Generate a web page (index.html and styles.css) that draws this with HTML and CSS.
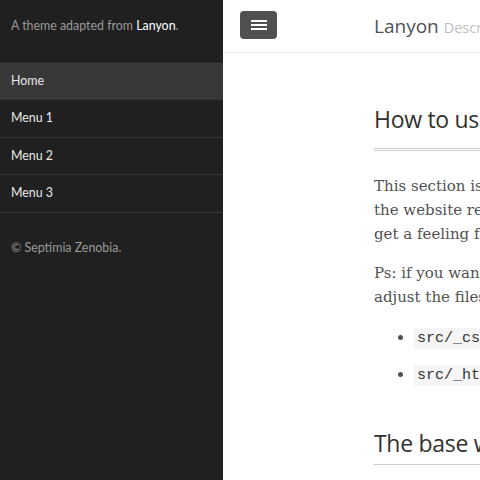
FILE: index.html
```html
<!DOCTYPE html>
<html lang="en">
<head>
<meta charset="utf-8">
<title>Lanyon</title>
<link rel="stylesheet" href="styles.css">
</head>
<body>
<aside class="sidebar">
  <div class="sidebar-about">
    <p>A theme adapted from <a href="#">Lanyon</a>.</p>
  </div>
  <nav class="sidebar-nav">
    <a class="nav-item active" href="#">Home</a>
    <a class="nav-item" href="#">Menu 1</a>
    <a class="nav-item" href="#">Menu 2</a>
    <a class="nav-item" href="#">Menu 3</a>
  </nav>
  <div class="sidebar-footer">
    <p>&copy; Septimia Zenobia.</p>
  </div>
</aside>
<div class="wrap">
  <header class="masthead">
    <button class="toggle" aria-label="Toggle sidebar">
      <svg width="16" height="12" viewBox="0 0 16 12"><rect x="0" y="1" width="16" height="2" fill="#fff"/><rect x="0" y="5" width="16" height="2" fill="#fff"/><rect x="0" y="9" width="16" height="2" fill="#fff"/></svg>
    </button>
    <h3 class="masthead-title"><a href="#">Lanyon</a> <small>Description of the site</small></h3>
  </header>
  <main class="container">
    <h1 class="page-title">How to use this template</h1>
    <p>This section is an introduction that shows<br>the website rendering its markdown, so you<br>get a feeling for the template.</p>
    <p>Ps: if you want to change the look and feel,<br>adjust the files:</p>
    <ul>
      <li><code>src/_css/main.css</code></li>
      <li><code>src/_html/layout.html</code></li>
    </ul>
    <h2 class="section-title">The base without changes</h2>
  </main>
</div>
</body>
</html>
```
FILE: styles.css
```css
html, body {
  margin: 0;
  padding: 0;
  height: 480px;
  overflow: hidden;
}
body {
  display: flex;
  background: #fff;
  font-family: "DejaVu Serif", serif;
}
.sidebar {
  flex: 0 0 223px;
  width: 223px;
  height: 480px;
  background: #202020;
  font-family: "Lato", "Open Sans", sans-serif;
  font-size: 12.4px;
  color: #9a9a9a;
}
.sidebar p { margin: 0; }
.sidebar a { color: #fff; text-decoration: none; }
.sidebar-about {
  padding: 17px 11px 27px;
  line-height: 18px;
}
.sidebar-nav {
  display: flex;
  flex-direction: column;
  border-bottom: 1px solid #333;
}
.nav-item {
  display: block;
  padding: 9px 11px 9px;
  line-height: 18.4px;
  border-top: 1px solid #333;
  color: #e8e8e8 !important;
}
.nav-item:first-child { border-top-color: #2a2a2a; }
.nav-item.active {
  background: #383838;
}
.sidebar-footer {
  padding: 26px 11px;
  line-height: 18px;
}
.wrap {
  flex: 0 0 700px;
  background: #fff;
}
.masthead {
  display: flex;
  align-items: center;
  height: 53px;
  box-sizing: border-box;
  padding: 0 0 0 17px;
  border-bottom: 1px solid #eee;
}
.toggle {
  width: 37px;
  height: 28px;
  margin: 0 0 2px;
  padding: 0;
  border: 0;
  border-radius: 4px;
  background: #505050;
  display: flex;
  align-items: center;
  justify-content: center;
}
.toggle svg { display: block; }
.masthead-title {
  margin: 0 0 0 97px;
  font-family: "Open Sans", sans-serif;
  font-weight: 400;
  font-size: 19px;
  white-space: nowrap;
}
.masthead-title a { color: #505050; text-decoration: none; }
.masthead-title small { font-size: 14.5px; color: #c0c0c0; font-weight: 400; }
.container {
  padding: 50px 0 0 151px;
  width: 400px;
  color: #515151;
  font-size: 15px;
  line-height: 24px;
}
.page-title, .section-title {
  font-family: "Open Sans", sans-serif;
  font-weight: 400;
  font-size: 23px;
  letter-spacing: -0.3px;
  color: #313131;
  margin: 0;
  white-space: nowrap;
}
.page-title {
  line-height: 32px;
  padding-bottom: 13px;
  border-bottom: 3px double #ccc;
  margin-bottom: 23px;
}
.container p { margin: 0 0 15px; white-space: nowrap; }
.container ul { margin: 16px 0 0; padding-left: 40px; list-style: disc; }
.container li { margin-bottom: 11px; }
code {
  font-family: "Liberation Mono", monospace;
  font-size: 15px;
  background: #f5f5f5;
  color: #333;
  padding: 2px 3px;
}
.section-title {
  margin-top: 39px;
  line-height: 32px;
  padding-bottom: 5px;
  border-bottom: 1px solid #ccc;
}
```
